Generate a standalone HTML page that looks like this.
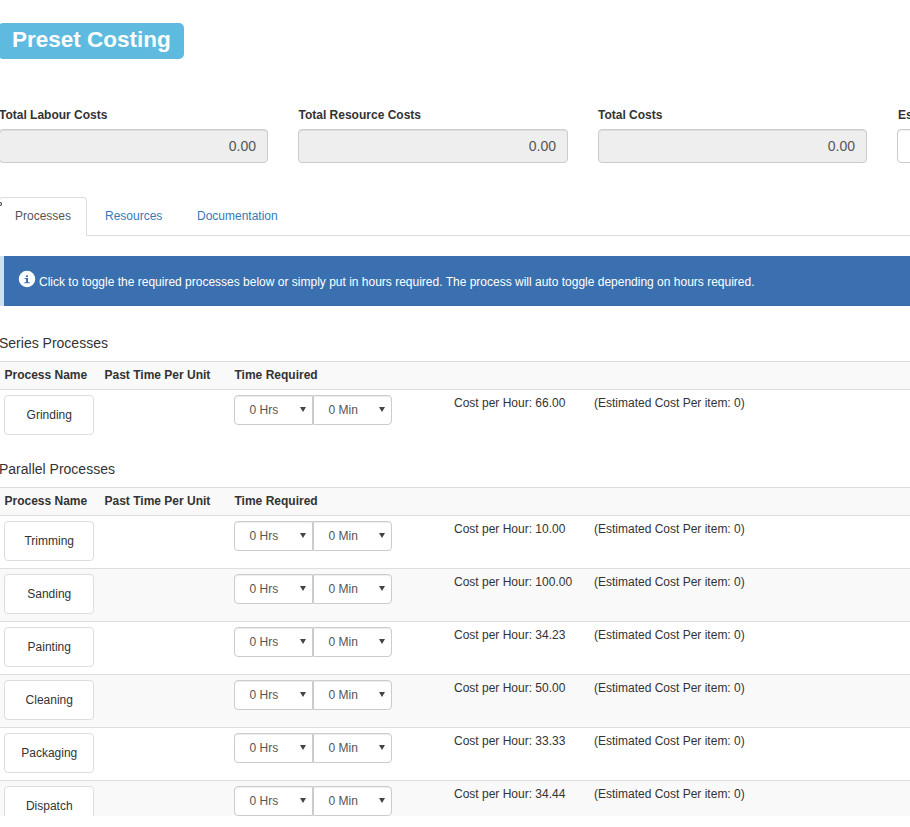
<!DOCTYPE html>
<html>
<head>
<meta charset="utf-8">
<title>Preset Costing</title>
<style>
*{box-sizing:border-box;}
html,body{margin:0;padding:0;}
body{width:910px;height:827px;overflow:hidden;position:relative;background:#fff;
 font-family:"Liberation Sans",sans-serif;font-size:12px;line-height:1.42857143;color:#333;}
.abs{position:absolute;}
#clip{position:absolute;left:0;top:0;width:910px;height:816px;overflow:hidden;}
.title{left:-2px;top:23px;height:36px;width:186px;background:#5ebade;border-radius:5px;color:#fff;
 font-weight:bold;font-size:22.5px;line-height:33px;padding-left:14px;white-space:nowrap;}
.lbl{font-weight:bold;font-size:12px;white-space:nowrap;top:107px;line-height:17px;}
.inp{top:129px;height:34px;width:269px;background:#eee;border:1px solid #ccc;border-radius:4px;
 font-size:14px;color:#555;text-align:right;padding:6px 11px 6px 12px;line-height:20px;
 box-shadow:inset 0 1px 1px rgba(0,0,0,.075);}
.tabline{left:0;top:235px;width:910px;height:1px;background:#ddd;}
.tab{top:197px;height:39px;line-height:17px;padding:10px 15px;white-space:nowrap;}
.tab.active{left:-1px;width:88px;border:1px solid #ddd;border-bottom-color:#fff;border-radius:4px 4px 0 0;color:#555;background:#fff;padding-left:15px;}
.tab.link{color:#337ab7;top:198px;}
.alert{left:0;top:256px;width:930px;height:50px;background:#3a70b0;border-left:4px solid #cfe1ee;color:#fff;
 white-space:nowrap;}
.alert .txt{position:absolute;left:35px;top:18px;line-height:17px;}
.alert svg{position:absolute;left:14.1px;top:13.8px;}
.h{font-size:14px;white-space:nowrap;left:-1px;line-height:20px;}
.thead{left:0;width:910px;height:29px;background:#f9f9f9;border-top:1px solid #ddd;border-bottom:1px solid #ddd;}
.thead span{position:absolute;top:5px;font-weight:bold;line-height:17px;white-space:nowrap;}
.row{left:0;width:910px;height:53px;border-top:1px solid #ddd;}
.row.s{background:#f9f9f9;}
.row.first{border-top:none;}
.btn{position:absolute;left:4px;top:5px;width:90px;height:40px;border:1px solid #ddd;border-radius:4px;background:#fff;
 text-align:center;line-height:39px;color:#333;padding-left:0.5px;}
.sel{position:absolute;top:5px;height:30px;width:79px;border:1px solid #ccc;background:#fff;color:#555;line-height:29px;padding-left:14.5px;
 box-shadow:inset 0 1px 1px rgba(0,0,0,.075);}
.sel.a{left:234px;border-radius:4px 0 0 4px;}
.sel.b{left:313px;width:79px;border-radius:0 4px 4px 0;}
.sel i{position:absolute;right:6px;top:11.2px;width:0;height:0;border-left:3.15px solid transparent;border-right:3.15px solid transparent;border-top:5.5px solid #444;}
.c1{position:absolute;left:454px;top:5px;line-height:17px;white-space:nowrap;}
.c2{position:absolute;left:594px;top:5px;line-height:17px;white-space:nowrap;}
</style>
</head>
<body>
<div id="clip">
<div class="abs title">Preset Costing</div>

<div class="abs lbl" style="left:-1px">Total Labour Costs</div>
<div class="abs lbl" style="left:298.5px">Total Resource Costs</div>
<div class="abs lbl" style="left:598px">Total Costs</div>
<div class="abs lbl" style="left:898px">Estimated</div>
<div class="abs inp" style="left:-1px">0.00</div>
<div class="abs inp" style="left:298px;width:270px">0.00</div>
<div class="abs inp" style="left:598px">0.00</div>
<div class="abs inp" style="left:897px;background:#fff"></div>

<div class="abs tabline"></div>
<div class="abs" style="left:-3px;top:202px;width:5px;height:4px;border:1px solid #333;border-radius:50%;z-index:5"></div>
<div class="abs tab active">Processes</div>
<div class="abs tab link" style="left:90px">Resources</div>
<div class="abs tab link" style="left:182px">Documentation</div>

<div class="abs alert">
<svg width="18" height="18" viewBox="0 0 18 18"><circle cx="9" cy="9" r="8.25" fill="#fff"/><rect x="7.9" y="5.4" width="2.1" height="1.6" fill="#3a70b0"/><path d="M6.7 8H10V12.3H11.7V13.3H6.4V12.3H8.05V9H6.7Z" fill="#3a70b0"/></svg>
<span class="txt">Click to toggle the required processes below or simply put in hours required. The process will auto toggle depending on hours required.</span>
</div>

<div class="abs h" style="top:333px">Series Processes</div>
<div class="abs thead" style="top:361px"><span style="left:4.5px">Process Name</span><span style="left:104.5px">Past Time Per Unit</span><span style="left:234.5px">Time Required</span></div>
<div class="abs row first" style="top:390px"><div class="btn">Grinding</div><div class="sel a">0 Hrs<i></i></div><div class="sel b">0 Min<i></i></div><span class="c1">Cost per Hour: 66.00</span><span class="c2">(Estimated Cost Per item: 0)</span></div>

<div class="abs h" style="top:459px">Parallel Processes</div>
<div class="abs thead" style="top:487px"><span style="left:4.5px">Process Name</span><span style="left:104.5px">Past Time Per Unit</span><span style="left:234.5px">Time Required</span></div>
<div class="abs row first" style="top:516px"><div class="btn">Trimming</div><div class="sel a">0 Hrs<i></i></div><div class="sel b">0 Min<i></i></div><span class="c1">Cost per Hour: 10.00</span><span class="c2">(Estimated Cost Per item: 0)</span></div>
<div class="abs row s" style="top:568px"><div class="btn">Sanding</div><div class="sel a">0 Hrs<i></i></div><div class="sel b">0 Min<i></i></div><span class="c1">Cost per Hour: 100.00</span><span class="c2">(Estimated Cost Per item: 0)</span></div>
<div class="abs row" style="top:621px"><div class="btn">Painting</div><div class="sel a">0 Hrs<i></i></div><div class="sel b">0 Min<i></i></div><span class="c1">Cost per Hour: 34.23</span><span class="c2">(Estimated Cost Per item: 0)</span></div>
<div class="abs row s" style="top:674px"><div class="btn">Cleaning</div><div class="sel a">0 Hrs<i></i></div><div class="sel b">0 Min<i></i></div><span class="c1">Cost per Hour: 50.00</span><span class="c2">(Estimated Cost Per item: 0)</span></div>
<div class="abs row" style="top:727px"><div class="btn">Packaging</div><div class="sel a">0 Hrs<i></i></div><div class="sel b">0 Min<i></i></div><span class="c1">Cost per Hour: 33.33</span><span class="c2">(Estimated Cost Per item: 0)</span></div>
<div class="abs row s" style="top:780px"><div class="btn">Dispatch</div><div class="sel a">0 Hrs<i></i></div><div class="sel b">0 Min<i></i></div><span class="c1">Cost per Hour: 34.44</span><span class="c2">(Estimated Cost Per item: 0)</span></div>
</div>
</body>
</html>
